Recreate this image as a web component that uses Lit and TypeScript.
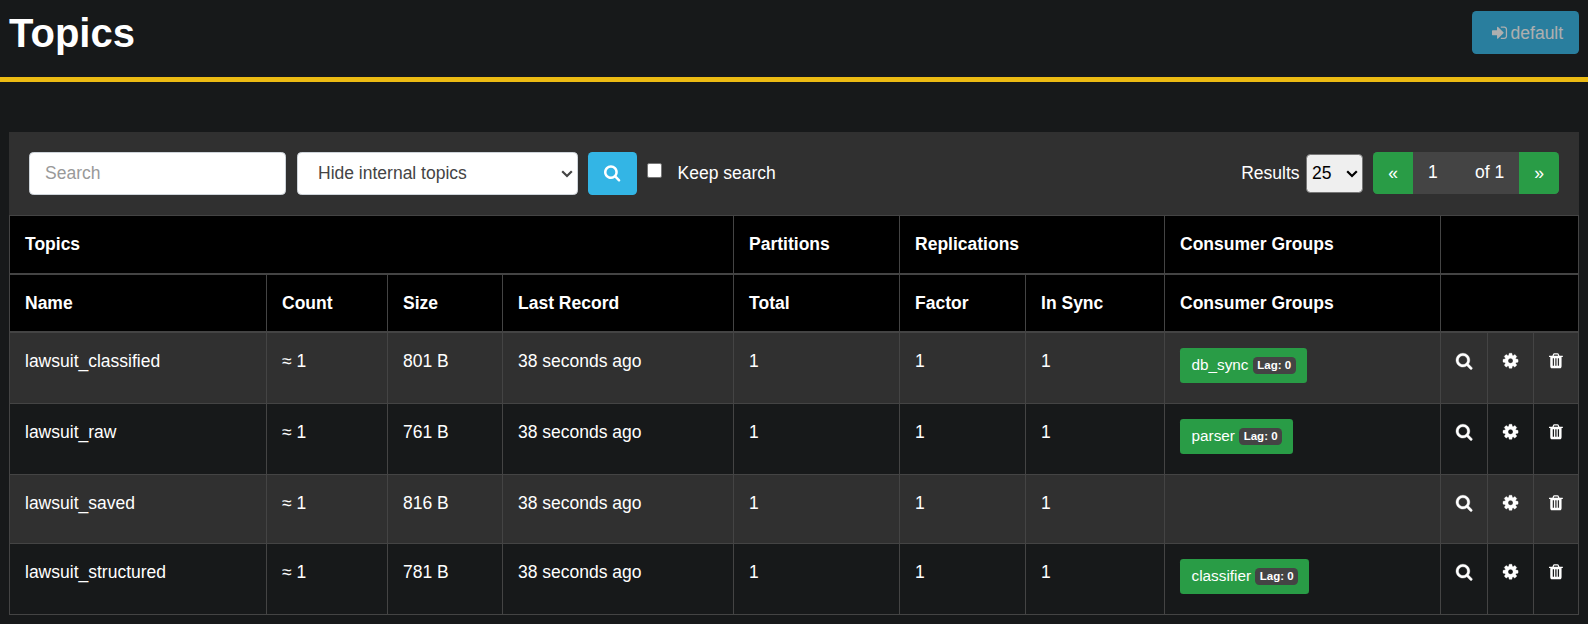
import { LitElement, html, css, svg, nothing } from "lit";
import { customElement } from "lit/decorators.js";

const searchIcon = html`<svg class="icon icon-search" viewBox="64 0 1664 1792">${svg`<path d="M1216 832q0-185-131.5-316.5t-316.5-131.5-316.5 131.5-131.5 316.5 131.5 316.5 316.5 131.5 316.5-131.5 131.5-316.5zm512 832q0 52-38 90t-90 38q-54 0-90-38l-343-342q-179 124-399 124-143 0-273.5-55.5t-225-150-150-225-55.5-273.5 55.5-273.5 150-225 225-150 273.5-55.5 273.5 55.5 225 150 150 225 55.5 273.5q0 220-124 399l343 343q37 37 37 90z"/>`}</svg>`;

const cogIcon = html`<svg class="icon icon-cog" viewBox="128 0 1536 1792">${svg`<path d="M1152 896q0-106-75-181t-181-75-181 75-75 181 75 181 181 75 181-75 75-181zm512-109v222q0 12-8 23t-20 13l-185 28q-19 54-39 91 35 50 107 138 10 12 10 25t-9 23q-27 37-99 108t-94 71q-12 0-26-9l-138-108q-44 23-91 38-16 136-29 186-7 28-36 28h-222q-14 0-24.5-8.5t-11.5-21.5l-28-184q-49-16-90-37l-141 107q-10 9-25 9-14 0-25-11-126-114-165-168-7-10-7-23 0-12 8-23 15-21 51-66.5t54-70.5q-27-50-41-99l-183-27q-13-2-21-12.5t-8-23.5v-222q0-12 8-23t19-13l186-28q14-46 39-92-40-57-107-138-10-12-10-24 0-10 9-23 26-36 98.5-107.5t94.5-71.5q13 0 26 10l138 107q44-23 91-38 16-136 29-186 7-28 36-28h222q14 0 24.5 8.5t11.5 21.5l28 184q49 16 90 37l142-107q9-9 24-9 13 0 25 10 129 119 165 170 7 8 7 22 0 12-8 23-15 21-51 66.5t-54 70.5q26 50 41 98l183 28q13 2 21 12.5t8 23.5z"/>`}</svg>`;

const trashIcon = html`<svg class="icon icon-trash" viewBox="192 0 1408 1792">${svg`<path d="M704 1376v-704q0-14-9-23t-23-9h-64q-14 0-23 9t-9 23v704q0 14 9 23t23 9h64q14 0 23-9t9-23zm256 0v-704q0-14-9-23t-23-9h-64q-14 0-23 9t-9 23v704q0 14 9 23t23 9h64q14 0 23-9t9-23zm256 0v-704q0-14-9-23t-23-9h-64q-14 0-23 9t-9 23v704q0 14 9 23t23 9h64q14 0 23-9t9-23zm-544-992h448l-48-117q-7-9-17-11h-317q-10 2-17 11zm928 32v64q0 14-9 23t-23 9h-96v948q0 83-47 143.5t-113 60.5h-832q-66 0-113-58.5t-47-141.5v-952h-96q-14 0-23-9t-9-23v-64q0-14 9-23t23-9h309l70-167q15-37 54-63t79-26h320q40 0 79 26t54 63l70 167h309q14 0 23 9t9 23z"/>`}</svg>`;

const signInIcon = html`<svg class="icon icon-cog" viewBox="128 0 1536 1792">${svg`<path d="M1312 896q0 26-19 45l-544 544q-19 19-45 19t-45-19-19-45v-288h-448q-26 0-45-19t-19-45v-384q0-26 19-45t45-19h448v-288q0-26 19-45t45-19 45 19l544 544q19 19 19 45zm352-352v704q0 119-84.5 203.5t-203.5 84.5h-320q-13 0-22.5-9.5t-9.5-22.5q0-4-1-20t-.5-26.5 3-23.5 10-19.5 20.5-6.5h320q66 0 113-47t47-113v-704q0-66-47-113t-113-47h-312l-11.5-1-11.5-3-8-5.5-7-9-2-13.5q0-4-1-20t-.5-26.5 3-23.5 10-19.5 20.5-6.5h320q119 0 203.5 84.5t84.5 203.5z"/>`}</svg>`;

const chevron = html`<svg class="chevron" width="12" height="8" viewBox="0 0 12 8">${svg`<path d="M1.2 1.2 6 6 10.800 1.200" fill="none" stroke="currentColor" stroke-width="2.2"/>`}</svg>`;

interface Topic {
  name: string;
  size: string;
  group?: string;
}

const topics: Topic[] = [
  { name: "lawsuit_classified", size: "801 B", group: "db_sync" },
  { name: "lawsuit_raw", size: "761 B", group: "parser" },
  { name: "lawsuit_saved", size: "816 B" },
  { name: "lawsuit_structured", size: "781 B", group: "classifier" },
];

@customElement("app-root")
export class AppRoot extends LitElement {
  static styles = css`
    :host {
      display: block;
      box-sizing: border-box;
      height: 624px;
      overflow: hidden;
      background: #17191a;
      color: #fff;
      font: 17.5px/1.5 "Liberation Sans", Arial, sans-serif;
    }
    * { box-sizing: border-box; }
    button, input, select { font: inherit; margin: 0; }
    .icon {
      height: 17.6px;
      fill: currentColor;
      flex: none;
      display: block;
      overflow: visible;
    }
    .icon-search { width: 16.34px; }
    .icon-cog { width: 15.09px; }
    .icon-trash { width: 13.83px; }
    td .icon-search, td .icon-cog { stroke: currentColor; stroke-width: 36; }

    .title {
      display: flex;
      align-items: flex-start;
      justify-content: space-between;
      height: 82px;
      padding: 11px 9px 0;
      border-bottom: 5px solid #ecbb13;
    }
    h1 { margin: -2px 0 0; font-size: 40px; line-height: 48px; font-weight: 700; }
    .login {
      display: flex;
      align-items: center;
      gap: 4px;
      width: 107px;
      height: 43px;
      padding: 1px 0 0 19.5px;
      border: 0;
      border-radius: 4.4px;
      background: #33b5e5;
      color: #fff;
      opacity: 0.65;
    }

    .content { padding: 50px 9px 0; }
    .toolbar {
      display: flex;
      align-items: flex-start;
      height: 83px;
      padding: 20px;
      background: #303030;
    }
    .search {
      width: 257px;
      height: 43px;
      padding: 0 15px;
      border: 1px solid #ced4da;
      border-radius: 4.4px;
      background: #fff;
      color: #444;
    }
    .search::placeholder { color: #999; opacity: 1; }
    .select {
      display: grid;
      grid-template-rows: 100%;
      align-items: center;
      line-height: 1.5;
      color: #444;
    }
    .select select, .select .chevron { grid-area: 1 / 1; }
    .select .chevron { justify-self: end; pointer-events: none; }
    .select select { appearance: none; width: 100%; height: 100%; color: inherit; }
    .filter-box { width: 281px; height: 43px; margin-left: 11px; }
    .filter-box .chevron { margin: 1px 5px 0 0; }
    .filter {
      padding: 0 0 1px 20px;
      border: 1px solid #ced4da;
      border-radius: 4.4px;
      background: #fff;
    }
    .go {
      display: flex;
      align-items: center;
      justify-content: center;
      width: 49px;
      height: 43px;
      margin-left: 10px;
      padding: 0 0 1px;
      border: 0;
      border-radius: 4.4px;
      background: #33b5e5;
      color: #fff;
    }
    .keep { display: flex; align-items: flex-start; margin-left: 10px; }
    .keep input {
      appearance: none;
      width: 15px;
      height: 15px;
      margin: 11px 15.5px 0 0;
      border: 1px solid #767676;
      border-radius: 2px;
      background: #fff;
    }
    .keep span { line-height: 43px; }
    .pager { display: flex; margin-left: auto; line-height: 43px; }
    .size-box { height: 39px; width: 57px; margin: 2px 10px 0 6.5px; color: #000; }
    .size-box .chevron { margin: 1px 5px 0 0; }
    .size {
      padding: 0 0 1px 5px;
      border: 1px solid #767676;
      border-radius: 4.4px;
      background: #efefef;
    }
    .pages {
      display: grid;
      grid-template-columns: 40px 47px 59px 40px;
      height: 42px;
      line-height: 41px;
      border-radius: 4.4px;
      overflow: hidden;
      background: #444;
    }
    .pages .step { background: #299c46; text-align: center; line-height: 42px; }
    .pages .num { padding-left: 15px; }

    table {
      width: 1570px;
      table-layout: fixed;
      border-collapse: collapse;
    }
    th, td {
      border: 1px solid #444;
      padding: 15px;
      text-align: left;
      vertical-align: top;
      white-space: nowrap;
    }
    th { background: #000; border-bottom-width: 2px; }
    .heads { height: 58px; }
    .row { height: 71px; }
    .row:first-child { height: 72px; }
    .row.short { height: 69px; }
    .row.odd { background: #303030; }
    td .icon { margin-top: 4px; }
    .group {
      display: flex;
      align-items: center;
      width: fit-content;
      height: 35px;
      padding: 0 11.2px 0 11.5px;
      gap: 4.3px;
      border-radius: 3.3px;
      background: #299c46;
      font-size: 15.3px;
    }
    .badge {
      padding: 2.9px 4.5px;
      border-radius: 4.4px;
      background: #444;
      font-size: 11.5px;
      font-weight: 700;
      line-height: 1;
    }
  `;

  private row(t: Topic, i: number) {
    return html`<tr class="row ${i % 2 ? "" : "odd"} ${t.group ? "" : "short"}">
      <td>${t.name}</td>
      <td>≈ 1</td>
      <td>${t.size}</td>
      <td>38 seconds ago</td>
      <td>1</td>
      <td>1</td>
      <td>1</td>
      <td>${t.group ? html`<div class="group"><span>${t.group}</span><span class="badge">Lag: 0</span></div>` : nothing}</td>
      <td>${searchIcon}</td>
      <td>${cogIcon}</td>
      <td>${trashIcon}</td>
    </tr>`;
  }

  render() {
    const widths = [257, 121, 115, 231, 166, 126, 139, 276, 47, 46, 45];
    return html`
      <header class="title">
        <h1>Topics</h1>
        <button class="login">${signInIcon}<span>default</span></button>
      </header>
      <main class="content">
        <div class="toolbar">
          <input class="search" placeholder="Search" />
          <div class="select filter-box">
            <select class="filter"><option>Hide internal topics</option></select>${chevron}
          </div>
          <button class="go" aria-label="Search">${searchIcon}</button>
          <label class="keep"><input type="checkbox" /><span>Keep search</span></label>
          <div class="pager">
            <span>Results</span>
            <div class="select size-box">
              <select class="size"><option>25</option></select>${chevron}
            </div>
            <div class="pages">
              <span class="step">«</span><span class="num">1</span><span class="num">of 1</span><span class="step">»</span>
            </div>
          </div>
        </div>
        <table>
          <colgroup>${widths.map((w) => html`<col style="width:${w}px" />`)}</colgroup>
          <thead>
            <tr class="heads">
              <th colspan="4">Topics</th>
              <th>Partitions</th>
              <th colspan="2">Replications</th>
              <th>Consumer Groups</th>
              <th colspan="3"></th>
            </tr>
            <tr class="heads">
              <th>Name</th>
              <th>Count</th>
              <th>Size</th>
              <th>Last Record</th>
              <th>Total</th>
              <th>Factor</th>
              <th>In Sync</th>
              <th>Consumer Groups</th>
              <th colspan="3"></th>
            </tr>
          </thead>
          <tbody>${topics.map((t, i) => this.row(t, i))}</tbody>
        </table>
      </main>
    `;
  }
}
